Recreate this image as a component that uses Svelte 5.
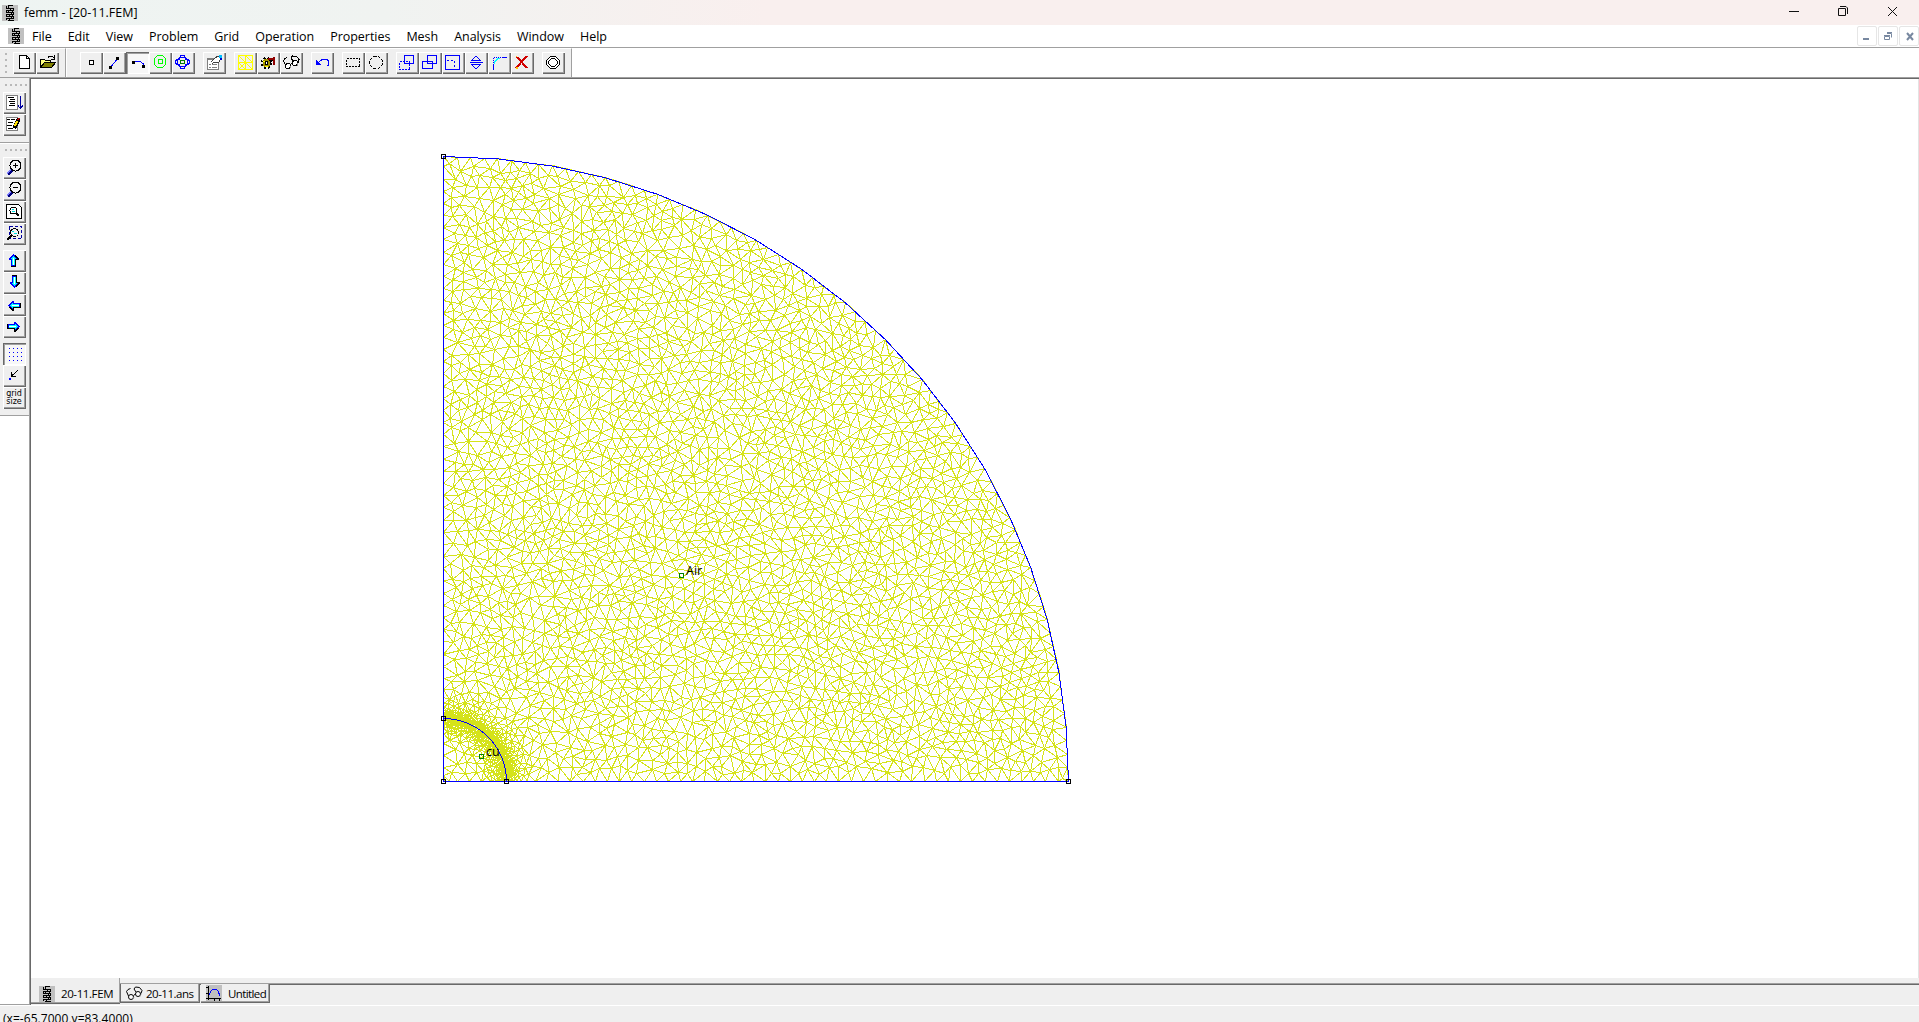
<script>
  const menus = ['File', 'Edit', 'View', 'Problem', 'Grid', 'Operation', 'Properties', 'Mesh', 'Analysis', 'Window', 'Help'];
  const topGroups = [
    ['node', 'segment', 'arc', 'block', 'group'],
    ['props'],
    ['mesh', 'solve', 'glasses'],
    ['undo'],
    ['selrect', 'selcircle'],
    ['move', 'copy', 'scale', 'mirror', 'fillet', 'delete'],
    ['open-bc']
  ];
  const sideGroups = [
    ['zoomin', 'zoomout', 'zoompage', 'zoomwin'],
    ['up', 'down', 'left', 'right'],
    ['grid', 'snap', 'gridsize']
  ];
  const pressed = ['arc', 'grid'];

  // Quarter-disc problem geometry in canvas pixels
  const OX = 412.5, OY = 703.5, R = 625, RI = 63;

  function arcPoints(r, n) {
    return Array.from({ length: n + 1 }, (_, i) => {
      const a = (i / n) * Math.PI / 2;
      return [r * Math.cos(a), r * Math.sin(a)];
    });
  }
  const toPath = (pts) => 'M' + pts.map(([x, y]) => `${(OX + x).toFixed(1)} ${(OY - y).toFixed(1)}`).join('L');
  const outer = toPath(arcPoints(R, 18));
  const inner = toPath(arcPoints(RI, 18));

  let seed = 20117;
  function rnd() {
    seed = (seed + 0x6d2b79f5) | 0;
    let t = Math.imul(seed ^ (seed >>> 15), 1 | seed);
    t = (t + Math.imul(t ^ (t >>> 7), 61 | t)) ^ t;
    return ((t ^ (t >>> 14)) >>> 0) / 4294967296;
  }

  // Local element size, refined at the conductor surface and corners
  function size(x, y) {
    const d = Math.abs(Math.hypot(x, y) - RI);
    let h = Math.min(8.4, 1.4 + Math.max(0, d - 4) * 0.24);
    for (const [cx, cy] of [[0, 0], [0, R], [R, 0]]) h = Math.min(h, 2.2 + 0.45 * Math.hypot(x - cx, y - cy));
    return h;
  }

  function samplePoints() {
    const pts = [], cell = 9, W = 75;
    const grid = Array.from({ length: W * W }, () => []);
    const add = (x, y) => {
      pts.push([x, y]);
      grid[Math.floor((x + 9) / cell) + W * Math.floor((y + 9) / cell)].push([x, y]);
    };
    const free = (x, y, h) => {
      const gx = Math.floor((x + 9) / cell), gy = Math.floor((y + 9) / cell);
      for (let j = Math.max(0, gy - 1); j <= Math.min(W - 1, gy + 1); j++)
        for (let i = Math.max(0, gx - 1); i <= Math.min(W - 1, gx + 1); i++)
          for (const p of grid[i + W * j]) if ((p[0] - x) ** 2 + (p[1] - y) ** 2 < h * h) return false;
      return true;
    };
    add(0, 0);
    for (let t = 2; t < R - 1; t += size(t, 0) * 1.45) { add(t, 0); add(0, t); }
    const rim = arcPoints(R, 18);
    for (let i = 0; i < 18; i++)
      for (let k = 0; k < 4; k++)
        add(rim[i][0] + (rim[i + 1][0] - rim[i][0]) * k / 4, rim[i][1] + (rim[i + 1][1] - rim[i][1]) * k / 4);
    add(0, R);
    for (const [x, y] of arcPoints(RI, 54).slice(1, -1)) add(x, y);
    const tryAt = (x, y) => {
      const h = size(x, y), m = h * 0.55;
      if (x < m || y < m || Math.hypot(x, y) > R - m - 1) return;
      if (free(x, y, h)) add(x, y);
    };
    for (let n = 0; n < 18000; n++) {
      const a = rnd() * Math.PI / 2, r = RI + (rnd() - 0.5) * 60;
      tryAt(r * Math.cos(a), r * Math.sin(a));
    }
    for (let n = 0; n < 90000; n++) tryAt(rnd() * R, rnd() * R);
    return pts;
  }

  // Incremental Delaunay triangulation, sweeping in x
  function triangulate(src) {
    const pts = src.map(([x, y]) => [x + rnd() * 1e-4, y + rnd() * 1e-4]).sort((a, b) => a[0] - b[0]);
    const n = pts.length;
    pts.push([-20000, -10000], [20000, -10000], [300, 30000]);
    const circum = (a, b, c) => {
      const [ax, ay] = pts[a], bx = pts[b][0] - ax, by = pts[b][1] - ay, cx = pts[c][0] - ax, cy = pts[c][1] - ay;
      const d = 2 * (bx * cy - by * cx), b2 = bx * bx + by * by, c2 = cx * cx + cy * cy;
      const ux = (cy * b2 - by * c2) / d, uy = (bx * c2 - cx * b2) / d;
      return { v: [a, b, c], x: ax + ux, y: ay + uy, r: ux * ux + uy * uy };
    };
    let open = [circum(n, n + 1, n + 2)];
    const done = [];
    for (let i = 0; i < n; i++) {
      const [px, py] = pts[i], next = [], edges = new Map();
      for (const t of open) {
        const dx = px - t.x, dy = py - t.y;
        if (dx > 0 && dx * dx > t.r) { done.push(t); continue; }
        if (dx * dx + dy * dy > t.r) { next.push(t); continue; }
        for (let k = 0; k < 3; k++) {
          const a = t.v[k], b = t.v[(k + 1) % 3], key = Math.min(a, b) * 100000 + Math.max(a, b);
          if (edges.has(key)) edges.set(key, null);
          else edges.set(key, [a, b]);
        }
      }
      for (const e of edges.values()) if (e) next.push(circum(e[0], e[1], i));
      open = next;
    }
    const seen = new Set();
    let d = '';
    for (const t of [...done, ...open]) {
      if (t.v.some((v) => v >= n)) continue;
      for (let k = 0; k < 3; k++) {
        const a = Math.min(t.v[k], t.v[(k + 1) % 3]), b = Math.max(t.v[k], t.v[(k + 1) % 3]), key = a * 100000 + b;
        if (seen.has(key)) continue;
        seen.add(key);
        const [x1, y1] = pts[a], [x2, y2] = pts[b];
        if (Math.hypot(x1 - x2, y1 - y2) > 40) continue;
        d += `M${Math.round(x1) + OX} ${OY - Math.round(y1)}L${Math.round(x2) + OX} ${OY - Math.round(y2)}`;
      }
    }
    return d;
  }
  const meshPath = triangulate(samplePoints());
  const corners = [[0, 0], [0, R], [R, 0], [0, RI], [RI, 0]];
</script>

{#snippet coil()}
  <svg class="coil" viewBox="0 0 16 16" width="16" height="16" shape-rendering="crispEdges">
    <path fill="#c0c0c0" d="M0 0h16v16H0z" />
    <path fill="none" stroke="#000" d="M6 .5h5M4.500 1v3M5 3.500h6M11.500 3v2M5 5.500h7M4.500 5v3M5 7.500h7M11.500 8v2M5 9.500h6M4.500 9v3M5 11.500h7M11.500 12v2M5 13.500h6M4.500 13v2M6 15.500h6M8.500 4l-2 3M9.500 8l-2 3M9.500 12l-2 3M6.500 1v2M10.500 5v2M10.500 9v2" />
  </svg>
{/snippet}

{#snippet lens()}
  <path stroke="#000080" stroke-width="3" d="m4.500 17.500 5-5" />
  <path stroke="#8080ff" d="m4 16.500 4-4" />
  <circle cx="12.500" cy="8.500" r="5.500" fill="#f4f4f4" stroke="#000" />
{/snippet}

{#snippet arrow()}
  <path fill="#0000ff" d="M10 4h1v1h1v1h1v1h1v1h1v2h-2v6H8v-6H6V8h1V7h1V6h1V5h1z" />
  <path fill="#00ffff" d="M10 6h1v1h1v1h1v1h-1v6h-1V9h-1v6H9V9H8V8h1V7h1z" />
  <path fill="#fff" d="M10 8h1v7h-1z" />
  <path fill="#000" d="M12 5h1v1h1v1h1v1h1v2h-3v7H8v-1h4V9h2V8h-1V7h-1z" />
{/snippet}

{#snippet specs()}
  <g stroke="#000">
    <circle cx="8" cy="14" r="2.500" fill="#fff" />
    <circle cx="15" cy="11" r="2.500" fill="#fff" />
    <path d="m10.500 12.500 2-1.500M5.500 13 3.500 8.500 5 6.500 7.500 5.500M13 9l-2-3 1.500-2 4 .5 2.500 3-1 3" />
    <path stroke="#909090" d="m10 16 1-2M17 13.500l1-2" />
  </g>
{/snippet}

{#snippet icon(name)}
  <svg viewBox="0 0 23 22" width="23" height="22" fill="none" stroke-width="1" shape-rendering="crispEdges">
    {#if name === 'new'}
      <path fill="#fff" stroke="#000" d="M6.500 3.500h7l3 3v10h-10z" /><path stroke="#000" d="M13.500 3.500v3h3" />
    {:else if name === 'open'}
      <path fill="#ffff80" stroke="#000" d="M4.500 15.500v-8h4l1 1h5v3h-6z" /><path fill="#808000" stroke="#000" d="m4.500 15.500 4-5h11l-4 5z" /><path stroke="#000" d="M12 5.500 13.500 4H16l2 2M18.500 3v4H15" />
    {:else if name === 'node'}
      <path fill="#fff" stroke="#000" d="M9.500 8.500h4v4h-4z" />
    {:else if name === 'segment'}
      <path stroke="#0000ff" d="m7.500 15.500 7-9" /><path fill="#000" d="M6 14h3v3H6zM13 5h3v3h-3z" />
    {:else if name === 'arc'}
      <path stroke="#0000ff" d="M7.500 10.500 10 9.500h4l3 2 1 4" /><path fill="#000" d="M6 9h3v3H6zM16 13h3v3h-3z" />
    {:else if name === 'block'}
      <path stroke="#00ff00" d="M8.500 3.500h5l3 3v6l-3 3h-5l-3-3v-6zM9 7.500h4v4H9z" />
    {:else if name === 'group'}
      <path stroke="#0000ff" d="M7.500 5.500 9 3.500h3l1.500 2 2 2 2 1v3l-2 1-2 2-1.500 2H9l-1.500-2-2-2-2-1v-3l2-1z" /><path stroke="#0000ff" d="M7.500 5.500h6v2h2v5h-2v2h-6v-2h-2v-5h2z" /><path stroke="#008000" d="M8.500 8.500h4v3h-4z" />
    {:else if name === 'props'}
      <path fill="#fff" stroke="#808080" d="M4.500 6.500h11v11h-11z" /><path fill="#808080" d="M4 6h6v2H4zM6 12h2v1H6zM9 12h5v1H9zM6 15h2v1H6zM9 15h5v1H9z" /><path fill="#fff" stroke="#404040" d="m8 10 4-4 3-2 3 2-2 4-3 1-2-1-2 2" /><path fill="#00bfff" d="M16 3h3v3h-3z" /><path fill="#0000c0" d="M17 6h2v2h-2z" />
    {:else if name === 'mesh'}
      <path stroke="#ffff00" d="M4.500 3.500h14v14h-14zM11.500 3.500v14M4.500 10.500h14M4.500 17.500l7-7M4.500 3.500l14 14M11.500 3.500l7 7M4.500 10.500l7 7" />
    {:else if name === 'solve'}
      <circle cx="9.500" cy="11" r="5" stroke="#000" stroke-width="2" stroke-dasharray="2 2" /><circle cx="9.500" cy="11" r="4" fill="#a09000" /><circle cx="9.500" cy="11" r="1.500" fill="#fff" stroke="#000" /><path stroke="#ffff00" d="M6 9.500h2M8 14.500h3" /><path stroke="#000" d="M12 8.500h4" /><path stroke="#900000" stroke-width="2" d="M11 7h7M17 5v8" />
    {:else if name === 'glasses'}
      {@render specs()}
    {:else if name === 'undo'}
      <path stroke="#0000ff" d="m6 12 3-3 3-2h4l1.500 2v4l-1 1" /><path fill="#0000ff" d="M5 8v5h6z" />
    {:else if name === 'selrect'}
      <path stroke="#000" stroke-dasharray="2 1" d="M4.500 6.500h13v8h-13z" />
    {:else if name === 'selcircle'}
      <path stroke="#000" stroke-dasharray="3 1.500" d="M8.500 4.500h5l4 4v4l-4 4h-5l-4-4v-4z" />
    {:else if name === 'move'}
      <path stroke="#0000ff" d="M8.500 3.500h9v8h-9z" /><path stroke="#0000ff" stroke-dasharray="2 1" d="M3.500 9.500h10v8h-10z" />
    {:else if name === 'copy'}
      <path stroke="#0000ff" d="M8.500 3.500h9v8h-9zM3.500 9.500h10v7h-10z" />
    {:else if name === 'scale'}
      <path stroke="#0000ff" d="M3.500 3.500h14v14h-14z" /><path stroke="#0000ff" stroke-dasharray="2 2" d="M5 8.500h7.500V17" />
    {:else if name === 'mirror'}
      <path stroke="#0000ff" d="M5 10.500h13M6.500 8.500h9l-4.500-4.500zM6.500 12.500h9l-4.500 4.500z" />
    {:else if name === 'fillet'}
      <path stroke="#0000ff" d="M5.500 13v5M14 5.500h5" /><path stroke="#00ffff" d="M5.500 13.500 6.500 10l3-3 4-1.500" /><path stroke="#0000ff" stroke-dasharray="1 1" d="M5.500 13V5.500H14" />
    {:else if name === 'delete'}
      <path stroke="#d00000" stroke-width="2" d="m6 5 10 11M16 4 5 16" /><path fill="#ffc000" d="M5 4h1v1H5zM5 15h2v2H5z" />
    {:else if name === 'open-bc'}
      <path fill="#fff" stroke="#000" d="M8.500 4.500h5l4 4v4l-4 4h-5l-4-4v-4z" /><path stroke="#000" d="M9.500 6.500h3l3 3v2l-3 3h-3l-3-3v-2z" />
    {:else if name === 'run'}
      <path fill="#fff" stroke="#808080" d="M3.500 3.500h11v14h-11z" /><path stroke="#000" d="M5 5.500h6M7 7.500h5M6 9.500h6M7 11.500h5M6 13.500h6" /><path stroke="#0000a0" d="M17.500 4v12M15 13.500l2.500 3 2.500-3" />
    {:else if name === 'edit'}
      <path fill="#fff" stroke="#808080" d="M3.500 3.500h11v13h-11z" /><path stroke="#000" d="M4 5.500h3M8 5.500h4M5 8.500h5M4 11.500h5M5 14.500h5" /><path stroke="#000" stroke-width="4" d="m11 14 5-9" /><path stroke="#ffe000" stroke-width="2" d="m11.500 12 3-5" /><path stroke="#b00000" stroke-width="2" d="m15 6 1-2" />
    {:else if name === 'zoomin'}
      {@render lens()}<path stroke="#000" d="M10 8.500h5M12.500 6v5" />
    {:else if name === 'zoomout'}
      {@render lens()}<path stroke="#000" d="M10 8.500h5" />
    {:else if name === 'zoompage'}
      <path fill="#fff" stroke="#000" d="M3.500 3.500h12l3 3v11h-15z" /><circle cx="10.500" cy="9.500" r="3.500" stroke="#000" /><path stroke="#000" stroke-width="2" d="m13 12 3 3" /><path stroke="#00e0e0" d="M9 8.500h2M9 10.500h3" />
    {:else if name === 'zoomwin'}
      <path stroke="#0000a0" stroke-dasharray="3 2" d="M6.500 3.500h12v12h-12z" /><circle cx="11.500" cy="9.500" r="4" fill="#f4f4f4" stroke="#000" /><path stroke="#000" stroke-width="2" d="m4 17 5-5" /><path stroke="#00e0e0" d="M9 8.500h2M11 10.500h3" />
    {:else if name === 'up'}
      {@render arrow()}
    {:else if name === 'down'}
      <g transform="matrix(1 0 0 -1 1 20)">{@render arrow()}</g>
    {:else if name === 'left'}
      <g transform="matrix(0 1 1 0 1 1)">{@render arrow()}</g>
    {:else if name === 'right'}
      <g transform="matrix(0 1 -1 0 21 0)">{@render arrow()}</g>
    {:else if name === 'grid'}
      {#each [5.5, 9.5, 13.5, 17.5] as y}<path stroke="#0000ff" stroke-dasharray="1 3" d="M6 {y}h13" />{/each}
    {:else if name === 'snap'}
      <path stroke="#000" d="m8 12 7-7M8.500 7v4.500H13" /><path fill="#000" d="M8 9h2v3H8z" /><path fill="#0000ff" d="M6 13h2v2H6z" />
    {:else if name === 'gridsize'}
      <text x="11" y="8.500" class="tiny">grid</text><text x="11" y="16.500" class="tiny">size</text>
    {/if}
  </svg>
{/snippet}

{#snippet button(name)}
  <button class="tool" class:pressed={pressed.includes(name)} aria-label={name}>{@render icon(name)}</button>
{/snippet}

<div class="window">
  <header class="title">
    {@render coil()}
    <span class="caption">femm - [20-11.FEM]</span>
    <svg class="controls" width="130" height="25" viewBox="0 0 130 25" fill="none" stroke="#111">
      <path d="M10 11.500h10" /><path d="M59.500 8.500h7v7h-7zM61 6.500h6l1.500 1.500v6" /><path d="m109 7 9 9m0-9-9 9" />
    </svg>
  </header>

  <nav class="menu">
    {@render coil()}
    <div class="items">{#each menus as m}<span>{m}</span>{/each}</div>
    <div class="mdi">
      <span><svg width="18" height="18"><path fill="#7888a0" d="M5 11h6v2H5z" /></svg></span>
      <span><svg width="18" height="18" fill="none" stroke="#7888a0"><path d="M5.500 9.500h5v3h-5zM8 6.500h4.500v4M5 8.500h6M8 5.500h5" /></svg></span>
      <span><svg width="18" height="18"><path stroke="#7888a0" stroke-width="2" d="m7 6 6 7m0-7-6 7" /></svg></span>
    </div>
  </nav>

  <div class="bar">
    <div class="file"><i class="grip"></i>{@render button('new')}{@render button('open')}</div>
    <div class="tools">
      <i class="grip"></i>
      {#each topGroups as g}<div class="set">{#each g as b}{@render button(b)}{/each}</div>{/each}
    </div>
  </div>

  <main>
    <aside>
      <div class="side first"><i class="hgrip"></i><div class="col">{@render button('run')}{@render button('edit')}</div></div>
      <div class="side second">
        <i class="hgrip"></i>
        {#each sideGroups as g}<div class="col">{#each g as b}{@render button(b)}{/each}</div>{/each}
      </div>
    </aside>
    <section class="view">
      <svg class="model" width="1886" height="900" viewBox="0 0 1886 900" fill="none" shape-rendering="crispEdges">
        <path d={meshPath} stroke="#d5e31a" />
        <path d="M{OX} {OY - R}V{OY}H{OX + R}" stroke="#0000ff" />
        <path d={outer} stroke="#0000ff" />
        <path d={inner} stroke="#0000ff" />
        {#each corners as [x, y]}<rect x={OX + x - 2} y={OY - y - 2} width="4" height="4" stroke="#000" />{/each}
        <rect x="448.500" y="676.500" width="4" height="4" stroke="#008000" />
        <rect x="648.500" y="495.500" width="4" height="4" stroke="#008000" />
        <text x="455" y="678" class="label">cu</text>
        <text x="655" y="497" class="label">Air</text>
      </svg>
      <div class="tabs">
        <div class="tab active">{@render coil()}<span>20-11.FEM</span></div>
        <div class="tab two"><svg width="18" height="16" viewBox="2 2 18 16" fill="none">{@render specs()}</svg><span>20-11.ans</span></div>
        <div class="tab three">
          <svg width="16" height="16" shape-rendering="crispEdges" fill="none"><path fill="#c0c0c0" d="M0 0h16v16H0z" /><path stroke="#000" d="M2.500 1v14M0 13.500h15M0 2.500h3M0 8.500h3M8.500 13v3M13.500 13v3" /><path stroke="#0000ff" d="m3 10 2-4 2-2h3l2 2 2 5" /></svg>
          <span>Untitled</span>
        </div>
      </div>
    </section>
  </main>
  <footer>(x=-65.7000,y=83.4000)</footer>
</div>

<style>
  :global(body) { background: #fff; overflow: hidden; }
  .window { width: 1919px; height: 1022px; display: flex; flex-direction: column; overflow: hidden; font: 12px 'Open Sans', 'Noto Sans', sans-serif; color: #000; box-sizing: border-box; }
  .title { height: 25px; display: flex; align-items: center; padding-left: 2px; background: linear-gradient(90deg, #eef4f2 0, #f0f3f1 20%, #f9efee 40%, #f9efee 100%); flex: none; }
  .coil { display: block; flex: none; }
  .caption { margin-left: 6px; line-height: 24px; flex: 1; font-size: 12.500px; }
  .controls { flex: none; margin-right: 10px; }
  .menu { height: 22px; display: flex; align-items: flex-start; padding-left: 8px; border-bottom: 1px solid #a0a0a0; flex: none; box-sizing: content-box; }
  .menu .coil { margin-top: 3px; }
  .items { display: flex; gap: 16px; margin-left: 8px; line-height: 23px; flex: 1; font-size: 12.500px; letter-spacing: -0.03px; }
  .mdi { display: flex; gap: 1px; padding-top: 1px; }
  .mdi span { width: 18px; height: 18px; border: 1px solid #e6e6e6; border-radius: 2px; }
  .mdi svg { display: block; }
  .bar { height: 29px; display: flex; flex: none; border-bottom: 1px solid #a0a0a0; }
  .file, .tools { display: flex; background: #efefef; padding-top: 3px; border-right: 1px solid #a0a0a0; border-top: 1px solid #fff; box-sizing: border-box; }
  .file { width: 66px; padding-left: 5px; }
  .tools { width: 506px; padding-left: 6px; border-left: 1px solid #fff; }
  .grip { width: 2px; height: 20px; margin-top: 1px; background: repeating-linear-gradient(#b8b8b8 0 2px, #efefef 2px 6px); margin-right: 6px; }
  .set { display: flex; margin-right: 8px; }
  .tools .grip { margin-right: 7px; }
  .tool { display: block; flex: none; width: 23px; height: 22px; padding: 0; border: 0; background: #efefef; box-shadow: inset 1px 1px #fff, inset -1px -1px #696969, inset -2px -2px #a0a0a0; }
  .tool svg { display: block; }
  .pressed { background: #f7f7f7; box-shadow: inset 1px 1px #696969, inset 2px 2px #a0a0a0, inset -1px -1px #fff; }
  .tiny { font: 8px 'DejaVu Sans', sans-serif; fill: #000; text-anchor: middle; }
  main { display: flex; height: 927px; flex: none; }
  aside { width: 29px; border-bottom: 1px solid #a0a0a0; }
  .side { background: #efefef; border-bottom: 1px solid #a0a0a0; box-sizing: border-box; display: flex; flex-direction: column; padding-left: 3px; }
  .first { height: 65px; padding-top: 6px; }
  .second { height: 273px; padding-top: 5px; border-top: 1px solid #fff; }
  .hgrip { width: 22px; height: 2px; margin-left: 2px; flex: none; background: repeating-linear-gradient(90deg, #b8b8b8 0 2px, #efefef 2px 5px); }
  .first .hgrip { margin-bottom: 6px; }
  .second .hgrip { margin-bottom: 6px; }
  .col { margin-bottom: 5px; }
  .view { flex: 1; border-left: 1px solid #a0a0a0; box-shadow: inset 1px 0 #696969, inset 0 1px #696969, inset -1px 0 #e3e3e3; padding-left: 1px; height: 927px; box-sizing: border-box; min-width: 0; }
  .model { display: block; }
  .label { font: 12.500px 'Open Sans', sans-serif; fill: #000; }
  .tabs { height: 27px; background: #efefef; display: flex; align-items: flex-start; box-shadow: inset 0 5px #efefef, inset 0 6px #a0a0a0, inset 0 7px #696969; line-height: 18px; }
  .tab { display: flex; align-items: center; box-sizing: border-box; font-size: 11.500px; letter-spacing: -0.4px; background: #efefef; border-right: 1px solid #696969; border-bottom: 1px solid #696969; box-shadow: inset -1px -1px #a0a0a0; }
  .active { width: 89px; height: 26px; padding: 8px 0 1px 8px; border-right: 0; }
  .active span { margin-left: 6px; }
  .two { width: 80px; height: 19px; margin-top: 6px; padding-left: 4px; border-left: 1px solid #696969; }
  .two span { margin-left: 3px; letter-spacing: -0.5px; }
  .three { width: 69px; height: 19px; margin-top: 6px; margin-left: 1px; padding-left: 5px; }
  .three span { margin-left: 6px; letter-spacing: -0.6px; }
  .two span, .three span { padding-top: 1px; }
  footer { height: 17px; background: #efefef; flex: none; padding: 4px 0 0 3px; line-height: 17px; box-sizing: border-box; overflow: hidden; border-top: 1px solid #fff; letter-spacing: 0.05px; }
</style>
